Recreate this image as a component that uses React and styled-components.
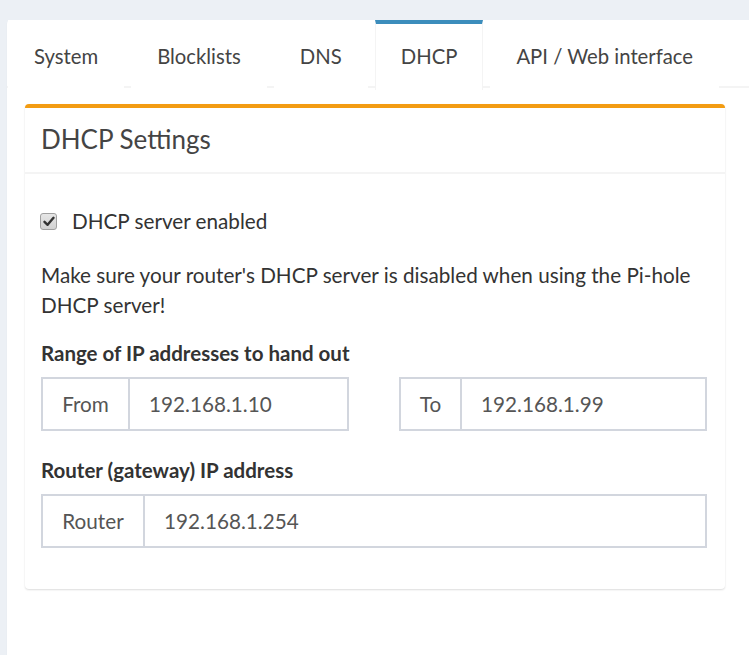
import React from "react";
import styled, { createGlobalStyle } from "styled-components";

const Global = createGlobalStyle`
  html, body { margin: 0; padding: 0; background: #ecf0f5; }
  body { font-family: "Source Sans Pro", Lato, "Liberation Sans", sans-serif; color: #333; }
  * { box-sizing: border-box; }
`;

const Page = styled.div`
  padding: 20px 0 0 7px;
  height: 655px;
  overflow: hidden;
`;

const TabsCard = styled.div`
  background: #fff;
  border-radius: 4px 0 0 0;
  box-shadow: 0 1px 1px rgba(0,0,0,0.1);
  min-height: 700px;
`;

const TabBar = styled.ul`
  display: flex;
  margin: 0;
  padding: 0;
  list-style: none;
  border-bottom: 2px solid #f4f4f4;
  height: 68px;
`;

const Tab = styled.li`
  margin-right: 7px;
  margin-bottom: -2px;
  padding: 0 25px 3px;
  display: flex;
  align-items: center;
  font-size: 20.3px;
  color: #444;
  border-left: 1px solid ${p => (p.$active ? "#f4f4f4" : "transparent")};
  border-right: 1px solid ${p => (p.$active ? "#f4f4f4" : "transparent")};
  border-top: 4px solid ${p => (p.$active ? "#3c8dbc" : "transparent")};
  background: #fff;
  height: 70px;
  &:first-child { margin-left: 1px; }
`;

const TabContent = styled.div`
  padding: 16px 0 0 18px;
  width: 718px;
`;

const Box = styled.div`
  background: #fff;
  border-top: 4px solid #f39c12;
  border-radius: 4px;
  box-shadow: 0 1px 2px rgba(0,0,0,0.14);
  width: 700px;
`;

const BoxHeader = styled.div`
  height: 66px;
  display: flex;
  align-items: center;
  padding: 0 16px 2px;
  border-bottom: 2px solid #f4f4f4;
`;

const BoxTitle = styled.h3`
  margin: 0;
  font-size: 26px;
  font-weight: 400;
  color: #444;
`;

const BoxBody = styled.div`
  padding: 34px 18px 41px 16px;
`;

const CheckRow = styled.label`
  display: flex;
  align-items: center;
  gap: 15px;
  font-size: 20.7px;
  line-height: 26px;
`;

const CheckBox = styled.span`
  width: 17px;
  height: 17px;
  margin-left: -1px;
  border: 1px solid #a0a0a0;
  border-radius: 3px;
  background: linear-gradient(#e6e6e6, #d2d2d2);
  display: flex;
  align-items: center;
  justify-content: center;
`;

const Para = styled.p`
  margin: 26px 0 0;
  font-size: 20.7px;
  line-height: 30px;
`;

const FieldLabel = styled.div`
  font-size: 20.5px;
  font-weight: 700;
  margin-top: ${p => p.$mt}px;
  line-height: 30px;
`;

const GroupRow = styled.div`
  display: grid;
  grid-template-columns: ${p => p.$cols};
  gap: 50px;
  margin-top: 9px;
`;

const InputGroup = styled.div`
  display: flex;
  height: 54px;
  border: 2px solid #d2d6de;
`;

const Addon = styled.div`
  width: ${p => p.$w}px;
  border-right: 2px solid #d2d6de;
  display: flex;
  align-items: center;
  justify-content: center;
  font-size: 20.7px;
  color: #555;
`;

const Input = styled.div`
  flex: 1;
  display: flex;
  align-items: center;
  padding-left: 19px;
  font-size: 20.7px;
  color: #555;
`;

export default function App() {
  const tabs = ["System", "Blocklists", "DNS", "DHCP", "API / Web interface"];
  return (
    <>
      <Global />
      <Page>
        <TabsCard>
          <TabBar>
            {tabs.map(t => (
              <Tab key={t} $active={t === "DHCP"}>{t}</Tab>
            ))}
          </TabBar>
          <TabContent>
            <Box>
              <BoxHeader>
                <BoxTitle>DHCP Settings</BoxTitle>
              </BoxHeader>
              <BoxBody>
                <CheckRow>
                  <CheckBox>
                    <svg width="12" height="11" viewBox="0 0 12 11">
                      <path d="M1.5 5.8 L4.6 8.8 L10.5 1.8" fill="none" stroke="#333" strokeWidth="2.4" strokeLinecap="round" strokeLinejoin="round" />
                    </svg>
                  </CheckBox>
                  DHCP server enabled
                </CheckRow>
                <Para>Make sure your router's DHCP server is disabled when using the Pi-hole DHCP server!</Para>
                <FieldLabel $mt={18}>Range of IP addresses to hand out</FieldLabel>
                <GroupRow $cols="1fr 1fr">
                  <InputGroup>
                    <Addon $w={87}>From</Addon>
                    <Input>192.168.1.10</Input>
                  </InputGroup>
                  <InputGroup>
                    <Addon $w={61}>To</Addon>
                    <Input>192.168.1.99</Input>
                  </InputGroup>
                </GroupRow>
                <FieldLabel $mt={24}>Router (gateway) IP address</FieldLabel>
                <GroupRow $cols="1fr">
                  <InputGroup>
                    <Addon $w={102}>Router</Addon>
                    <Input>192.168.1.254</Input>
                  </InputGroup>
                </GroupRow>
              </BoxBody>
            </Box>
          </TabContent>
        </TabsCard>
      </Page>
    </>
  );
}
